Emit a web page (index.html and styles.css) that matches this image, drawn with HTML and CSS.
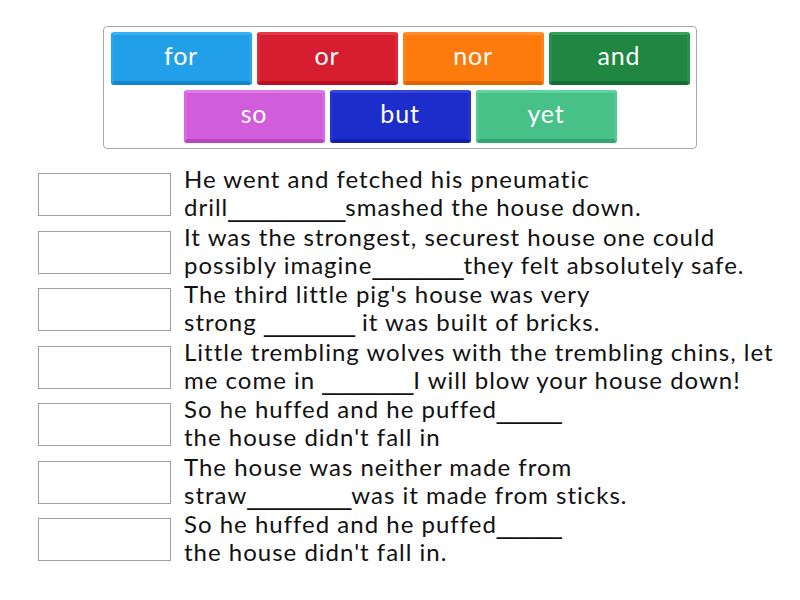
FILE: index.html
```html
<!DOCTYPE html>
<html>
<head>
<meta charset="utf-8">
<link rel="stylesheet" href="styles.css">
</head>
<body>
<div class="page">
  <div class="bank">
    <div class="row">
      <div class="tile c-for">for</div>
      <div class="tile c-or">or</div>
      <div class="tile c-nor">nor</div>
      <div class="tile c-and">and</div>
    </div>
    <div class="row">
      <div class="tile c-so">so</div>
      <div class="tile c-but">but</div>
      <div class="tile c-yet">yet</div>
    </div>
  </div>
  <div class="items">
    <div class="item"><div class="slot"></div><div class="text">He went and fetched his pneumatic<br>drill<span class="u">_________</span>smashed the house down.</div></div>
    <div class="item"><div class="slot"></div><div class="text">It was the strongest, securest house one could<br>possibly imagine<span class="u">_______</span>they felt absolutely safe.</div></div>
    <div class="item"><div class="slot"></div><div class="text">The third little pig's house was very<br>strong <span class="u">_______</span> it was built of bricks.</div></div>
    <div class="item"><div class="slot"></div><div class="text">Little trembling wolves with the trembling chins, let<br>me come in <span class="u">_______</span>I will blow your house down!</div></div>
    <div class="item"><div class="slot"></div><div class="text">So he huffed and he puffed<span class="u">_____</span><br>the house didn't fall in</div></div>
    <div class="item"><div class="slot"></div><div class="text">The house was neither made from<br>straw<span class="u">________</span>was it made from sticks.</div></div>
    <div class="item"><div class="slot"></div><div class="text">So he huffed and he puffed<span class="u">_____</span><br>the house didn't fall in.</div></div>
  </div>
</div>
</body>
</html>
```
FILE: styles.css
```css
html, body {
  margin: 0;
  padding: 0;
  background: #fff;
}
body {
  font-family: Lato, "Open Sans", sans-serif;
  color: #111;
}
.page {
  width: 800px;
  height: 600px;
  padding-top: 26px;
  box-sizing: border-box;
}
.bank {
  width: 594px;
  height: 123px;
  margin-left: 103px;
  box-sizing: border-box;
  border: 1px solid #a8a8a8;
  border-radius: 4px;
  padding: 5px 0 0 0;
  display: flex;
  flex-direction: column;
  gap: 5px;
}
.row {
  display: flex;
  justify-content: center;
  gap: 5px;
}
.tile {
  width: 141px;
  height: 53px;
  box-sizing: border-box;
  border-radius: 3px;
  color: #fff;
  font-size: 25px;
  letter-spacing: 0.8px;
  line-height: 40px;
  text-align: center;
  border: 3px solid;
  border-bottom-width: 4px;
}
.c-for { background: #229fe9; border-color: #3bb0f2 #2aa6ee #1486cc; }
.c-or  { background: #d61e30; border-color: #e53947 #dc2a3a #b8101f; }
.c-nor { background: #fd7a0c; border-color: #ff8e2c #ff8418 #e06700; }
.c-and { background: #1f8742; border-color: #35a05a #27914b #156e34; }
.c-so  { background: #d15ddb; border-color: #e07ae8 #d868e1 #b944c2; }
.c-but { background: #1c2dcc; border-color: #3646dc #2434d2 #1220ac; }
.c-yet { background: #47c187; border-color: #5fd39c #50c88e #36a571; }
.items {
  margin-top: 24px;
  display: flex;
  flex-direction: column;
  gap: 1.5px;
}
.item {
  display: flex;
  align-items: flex-start;
  height: 56px;
}
.slot {
  width: 133px;
  height: 43px;
  box-sizing: border-box;
  border: 1px solid #a0a0a0;
  margin-left: 38px;
  flex: none;
}
.text {
  margin-left: 13px;
  margin-top: -8px;
  font-size: 24px;
  letter-spacing: 1px;
  line-height: 28px;
  white-space: nowrap;
  color: #111;
}
.u {
  font-family: "DejaVu Sans", sans-serif;
  font-size: 26px;
  line-height: 0;
  letter-spacing: 0;
}
```
